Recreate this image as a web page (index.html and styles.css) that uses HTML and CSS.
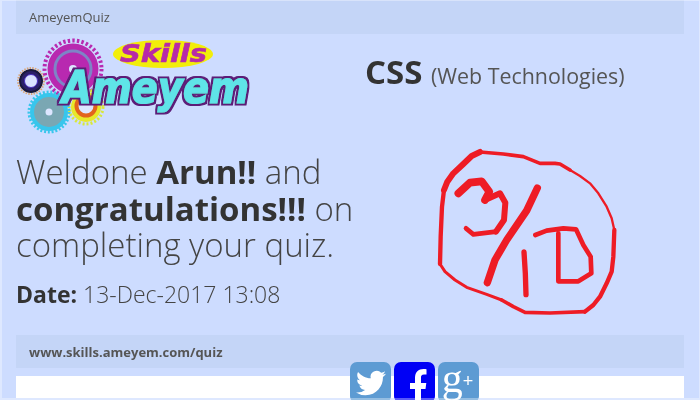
FILE: index.html
```html
<!DOCTYPE html>
<html lang="en">
<head>
<meta charset="utf-8">
<title>AmeyemQuiz</title>
<link rel="stylesheet" href="styles.css">
</head>
<body>
<div class="page">
  <header class="band band-top">AmeyemQuiz</header>
  <main class="result">
    <section class="left">
      <svg class="logo" width="240" height="80" viewBox="0 0 240 80" aria-label="Ameyem Skills">
        <defs>
          <filter id="outline" x="-5%" y="-15%" width="110%" height="130%">
            <feMorphology in="SourceAlpha" operator="dilate" radius="1.6" result="grown"/>
            <feFlood flood-color="#5c1f78"/>
            <feComposite in2="grown" operator="in" result="edge"/>
            <feMerge><feMergeNode in="edge"/><feMergeNode in="SourceGraphic"/></feMerge>
          </filter>
        </defs>
        <circle cx="57" cy="32" r="25.500" fill="#b829b0"/>
        <circle cx="57" cy="32" r="28.500" fill="none" stroke="#b829b0" stroke-width="4" stroke-dasharray="2.4 2.2"/>
        <circle cx="57" cy="32" r="18" fill="none" stroke="#7e84c6" stroke-width="3"/>
        <circle cx="57" cy="32" r="4" fill="#dde6ff"/>
        <circle cx="15" cy="44" r="11" fill="#2b2068" stroke="#1a1a3a" stroke-width="2"/>
        <circle cx="15" cy="44" r="13" fill="none" stroke="#d9a77a" stroke-width="2" stroke-dasharray="1.5 1.2"/>
        <circle cx="15" cy="44" r="6.500" fill="#dbe4ff" stroke="#4a2fc0" stroke-width="1"/>
        <circle cx="15" cy="44" r="3.500" fill="#dbe4ff"/>
        <circle cx="70" cy="70" r="15" fill="#e8e82a"/>
        <circle cx="70" cy="70" r="17" fill="none" stroke="#d8e83a" stroke-width="3" stroke-dasharray="2 2"/>
        <circle cx="70" cy="69" r="9.500" fill="#dde6ff" stroke="#e2641c" stroke-width="4"/>
        <circle cx="33" cy="75" r="17" fill="#7aa7b3" stroke="#38c6ec" stroke-width="4"/>
        <circle cx="33" cy="75" r="20" fill="none" stroke="#38c6ec" stroke-width="3" stroke-dasharray="2 1.8"/>
        <circle cx="33" cy="75" r="3.500" fill="#dde6ff"/>
        <ellipse cx="147" cy="17" rx="50" ry="14" fill="#f2ee0a"/>
        <text class="logo-skills" x="104" y="25" textLength="87" lengthAdjust="spacingAndGlyphs">Skills</text>
        <text class="logo-ameyem" x="46" y="66" textLength="187" lengthAdjust="spacingAndGlyphs" filter="url(#outline)">Ameyem</text>
      </svg>
      <h1 class="greeting">Weldone <b>Arun!!</b> and <b>congratulations!!!</b> on completing your quiz.</h1>
      <p class="date"><b>Date:</b> 13-Dec-2017 13:08</p>
    </section>
    <section class="right">
      <h2 class="subject">CSS <small>(Web Technologies)</small></h2>
      <svg class="score" width="200" height="190" viewBox="0 0 600 570" aria-label="Score 3 out of 10">
        <g fill="none" stroke="#ee1c25" stroke-linecap="round" stroke-linejoin="round">
          <path stroke-width="18" d="M150 36 125 48 100 72 70 100 52 125 42 150"/>
          <path stroke-width="13" d="M42 150 36 200 32 290 30 372"/>
          <path stroke-width="9" d="M30 372 45 395 75 420 110 442 170 463 215 480"/>
          <path stroke-width="11" d="M215 480 250 500 285 517 360 519 465 515"/>
          <path stroke-width="13" d="M465 515 490 495 510 470 530 430 545 395 550 350 553 270"/>
          <path stroke-width="7" d="M553 270 545 235 530 200 505 160 480 130 450 108 420 90"/>
          <path stroke-width="11" d="M420 90 390 72 375 70 330 70 280 50 220 42 150 36"/>
          <path stroke-width="23" d="M85 160 120 128 155 124 178 155 165 180"/>
          <path stroke-width="18" d="M165 180 210 160 226 188 222 240 198 275"/>
          <path stroke-width="14" d="M198 275 130 283 108 265"/>
          <path stroke-width="22" d="M322 144 290 212 230 300 195 360 172 428"/>
          <path stroke-width="16" d="M282 336 286 400 288 464"/>
          <path stroke-width="14" d="M316 285 350 272 400 265 438 268 460 315 482 350 484 400 445 424 385 424 385 280"/>
        </g>
      </svg>
    </section>
  </main>
  <footer class="band band-bottom">www.skills.ameyem.com/quiz</footer>
  <div class="details">
    <p class="details-text">how to read your full list</p>
  </div>
  <nav class="social">
    <a class="social-btn light" aria-label="Twitter"><svg width="30" height="30" viewBox="0 0 24 24"><path fill="#fff" d="M23.953 4.57a10 10 0 01-2.825.775 4.958 4.958 0 002.163-2.723c-.951.555-2.005.959-3.127 1.184a4.92 4.92 0 00-8.384 4.482C7.69 8.095 4.067 6.13 1.64 3.162a4.822 4.822 0 00-.666 2.475c0 1.71.87 3.213 2.188 4.096a4.904 4.904 0 01-2.228-.616v.06a4.923 4.923 0 003.946 4.827 4.996 4.996 0 01-2.212.085 4.936 4.936 0 004.604 3.417 9.867 9.867 0 01-6.102 2.105c-.39 0-.779-.023-1.17-.067a13.995 13.995 0 007.557 2.209c9.053 0 13.998-7.496 13.998-13.985 0-.21 0-.42-.015-.63A9.935 9.935 0 0024 4.59z"/></svg></a>
    <a class="social-btn blue" aria-label="Facebook"><svg width="41" height="41" viewBox="0 0 41 41"><path fill="#fff" d="M21 41V27h-5v-6h5v-5c0-6 3.500-9 8.500-9 1.500 0 2.600.1 3 .2v5.300h-2.500c-2.500 0-3 1.400-3 3V21h5.300l-.8 6h-4.500v14z"/></svg></a>
    <a class="social-btn light gplus" aria-label="Google Plus"><span class="g">g</span><span class="plus">+</span></a>
  </nav>
  <div class="edge"></div>
</div>
</body>
</html>
```
FILE: styles.css
```css
* { box-sizing: border-box; }
html, body { margin: 0; height: 100%; overflow: hidden; }
body { background: #cddcff; font-family: "Open Sans", sans-serif; color: #333; }
.page { position: relative; height: 400px; padding: 0 16px; overflow: hidden; filter: blur(0.35px); }
.band { background: #c4d5f7; color: #555; font-size: 13px; display: flex; align-items: center; padding: 0 13px; }
.band-top { height: 34px; }
.band-bottom { height: 33px; padding-top: 1px; font-weight: 700; }
.result { display: flex; height: 301px; }
.left { width: 345px; flex: none; }
.right { flex: 1; }
.logo { display: block; margin-top: 3px; overflow: visible; }
.logo-skills { font: italic 700 24px "DejaVu Sans", sans-serif; fill: #b72aa8; stroke: #b72aa8; stroke-width: 0.6px; }
.logo-ameyem { font: italic 700 44px "DejaVu Sans", sans-serif; fill: #5fe4e8; stroke: #5fe4e8; stroke-width: 1.2px; }
.greeting { margin: 37px 0 0; font-size: 33px; line-height: 36.5px; font-weight: 300; color: #444; }
.greeting b { font-weight: 700; color: #333; }
.date { margin: 16px 0 0; font-size: 23px; line-height: 29px; font-weight: 300; color: #444; }
.date b { font-weight: 700; color: #333; }
.subject { margin: 18px 0 0 4px; font-size: 33px; line-height: 40px; font-weight: 700; color: #333; white-space: nowrap; }
.subject small { font-size: 21.4px; font-weight: 400; color: #555; }
.score { display: block; margin: 44px 0 0 69px; }
.details { margin-top: 8px; height: 22px; background: #fff; overflow: hidden; }
.details-text { margin: 18px 0 0 13px; font-size: 18px; line-height: 24px; font-weight: 700; color: #444; }
.social { position: absolute; left: 350px; top: 362px; display: flex; gap: 3px; }
.social-btn { position: relative; width: 41px; height: 41px; border-radius: 7px; display: flex; align-items: center; justify-content: center; overflow: hidden; color: #fff; }
.light { background: #5d9bd3; }
.blue { background: #0000f5; }
.g { font: 42px/41px "Liberation Serif", serif; margin-top: -8px; margin-left: -2px; }
.plus { font: 400 18px/18px "Liberation Sans", sans-serif; margin-top: -4px; }
.edge { position: absolute; inset: 0; pointer-events: none; border: solid rgba(255, 255, 255, 0.35); border-width: 1px 1px 2px 2px; }
```
